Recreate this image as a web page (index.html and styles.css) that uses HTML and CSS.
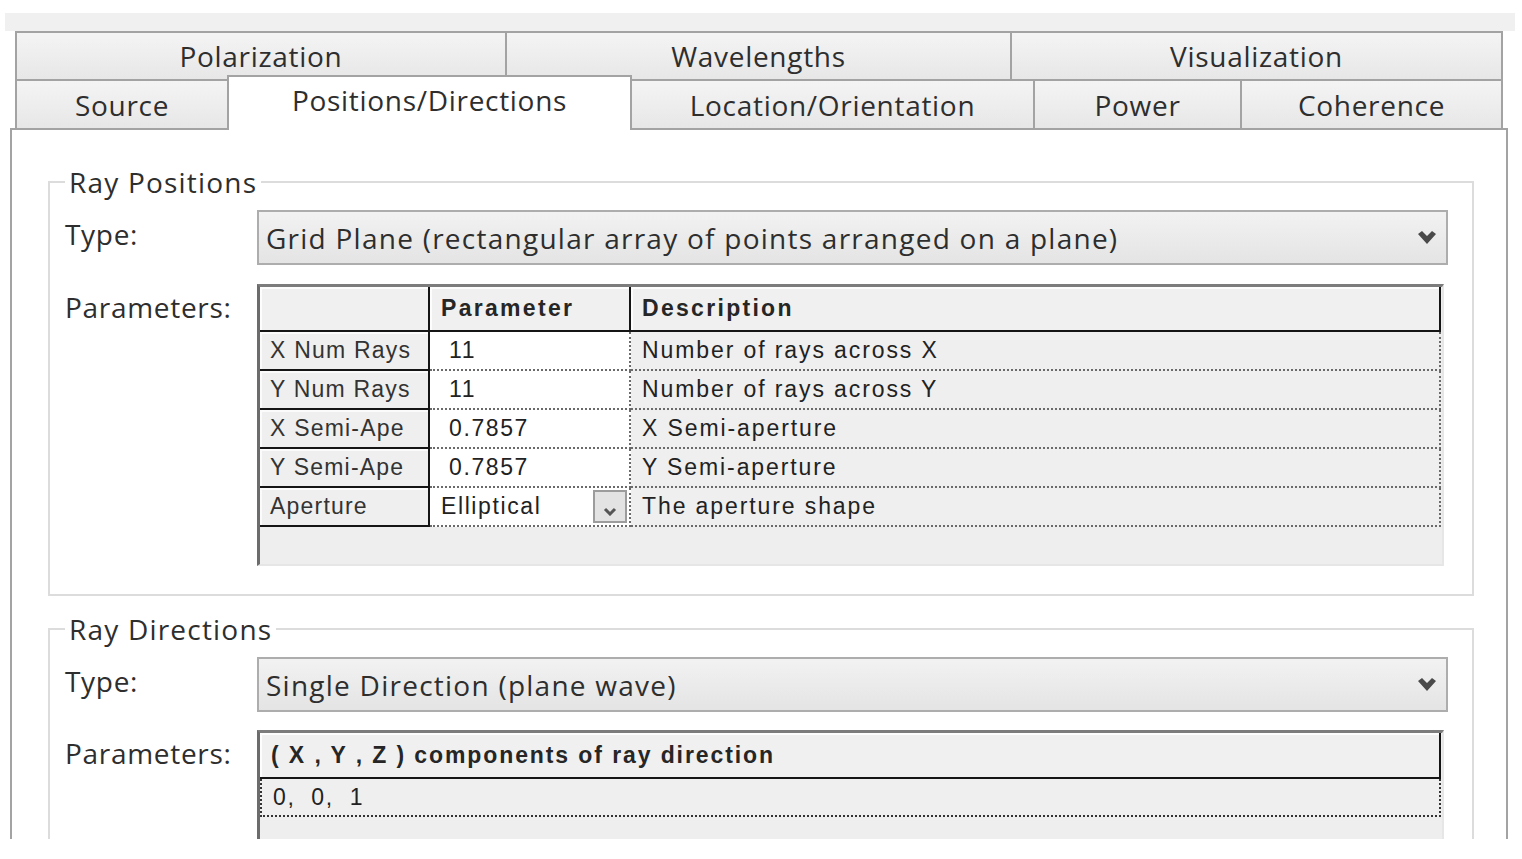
FILE: index.html
```html
<!DOCTYPE html>
<html>
<head>
<meta charset="utf-8">
<link rel="stylesheet" href="styles.css">
</head>
<body>
<div class="topband"></div>
<div class="tabs">
  <div class="tabrow row1">
    <div class="tab w-pol">Polarization</div>
    <div class="tab w-wav">Wavelengths</div>
    <div class="tab w-vis last">Visualization</div>
  </div>
  <div class="tabrow row2">
    <div class="tab w-src">Source</div>
    <div class="tab w-pos active">Positions/Directions</div>
    <div class="tab w-loc after-active">Location/Orientation</div>
    <div class="tab w-pow">Power</div>
    <div class="tab w-coh last">Coherence</div>
  </div>
</div>
<div class="panel">
  <fieldset class="group">
    <legend>Ray Positions</legend>
    <div class="frow">
      <div class="flabel type">Type:</div>
      <div class="select">
        <span>Grid Plane (rectangular array of points arranged on a plane)</span>
        <svg class="chev" width="18" height="14" viewBox="0 0 18 14"><polygon points="0,3 4,0 9,5 14,0 18,3 9,13" fill="#4a4a4a"/></svg>
      </div>
    </div>
    <div class="frow params">
      <div class="flabel">Parameters:</div>
      <div class="grid grid1">
        <div class="cell hc"></div>
        <div class="cell hc">Parameter</div>
        <div class="cell hc">Description</div>

        <div class="cell rh">X Num Rays</div>
        <div class="cell pv num">11</div>
        <div class="cell dc">Number of rays across X</div>

        <div class="cell rh">Y Num Rays</div>
        <div class="cell pv num">11</div>
        <div class="cell dc">Number of rays across Y</div>

        <div class="cell rh">X Semi-Ape</div>
        <div class="cell pv num">0.7857</div>
        <div class="cell dc">X Semi-aperture</div>

        <div class="cell rh">Y Semi-Ape</div>
        <div class="cell pv num">0.7857</div>
        <div class="cell dc">Y Semi-aperture</div>

        <div class="cell rh">Aperture</div>
        <div class="cell pv">
          <span>Elliptical</span>
          <span class="ddbtn"><svg width="14" height="9" viewBox="0 0 14 9"><polyline points="2,2 7,7 12,2" fill="none" stroke="#555" stroke-width="3"/></svg></span>
        </div>
        <div class="cell dc">The aperture shape</div>
      </div>
    </div>
  </fieldset>

  <fieldset class="group group2">
    <legend>Ray Directions</legend>
    <div class="frow">
      <div class="flabel type">Type:</div>
      <div class="select">
        <span>Single Direction (plane wave)</span>
        <svg class="chev" width="18" height="14" viewBox="0 0 18 14"><polygon points="0,3 4,0 9,5 14,0 18,3 9,13" fill="#4a4a4a"/></svg>
      </div>
    </div>
    <div class="frow params params2">
      <div class="flabel">Parameters:</div>
      <div class="grid grid2">
        <div class="cell hc hc2">( X , Y , Z ) components of ray direction</div>
        <div class="cell dr">0,  0,  1</div>
      </div>
    </div>
  </fieldset>
</div>
</body>
</html>
```
FILE: styles.css
```css
* { box-sizing: border-box; }
html, body { margin: 0; padding: 0; background: #fff; }
body {
  width: 1522px;
  height: 859px;
  overflow: hidden;
  font-family: "Open Sans", "Noto Sans", sans-serif;
  color: #2e2e2e;
}

.topband {
  height: 18px;
  margin: 13px 7px 0 5px;
  background: #f0f0f0;
}

.tabs { margin-left: 15px; width: 1488px; }
.tabrow { display: flex; }
.row1 { height: 48px; }
.row2 { height: 49px; }

.tab {
  flex: none;
  border-top: 2px solid #a3a3a3;
  border-left: 2px solid #a3a3a3;
  background: linear-gradient(#f4f4f4, #e7e7e7);
  display: flex;
  align-items: center;
  justify-content: center;
  font-size: 28px;
  letter-spacing: 0.7px;
  line-height: 1;
  color: #2e2e2e;
}
.tab.last { border-right: 2px solid #a3a3a3; }
.tab.after-active { border-left: none; }
.tab.active {
  background: #fff;
  margin-top: -4px;
  margin-bottom: -2px;
  position: relative;
  z-index: 1;
  border-right: 2px solid #a3a3a3;
  padding-bottom: 8px;
}
.w-pol { width: 490px; }
.w-wav { width: 505px; }
.w-vis { width: 493px; }
.w-src { width: 212px; }
.w-pos { width: 405px; }
.w-loc { width: 401px; }
.w-pow { width: 207px; }
.w-coh { width: 263px; }

.panel {
  margin-left: 10px;
  width: 1498px;
  height: 711px;
  border: 2px solid #a3a3a3;
  border-bottom: none;
  background: #fff;
  overflow: hidden;
}

.group {
  margin: 35px 32px 0 36px;
  border: 2px solid #dcdcdc;
  padding: 11px 24px 28px 15px;
  min-width: 0;
}
.group2 { margin-top: 16px; }
.group legend {
  font-size: 28px;
  letter-spacing: 1.2px;
  line-height: 34px;
  padding: 0 4px;
  color: #2e2e2e;
}

.frow { display: flex; align-items: center; }
.flabel {
  width: 192px;
  flex: none;
  font-size: 28px;
  letter-spacing: 0.7px;
  line-height: 34px;
  color: #2e2e2e;
}
.flabel.type { padding-bottom: 8px; }
.select {
  flex: 1;
  height: 55px;
  border: 2px solid #adadad;
  background: linear-gradient(#f2f2f2, #e4e4e4);
  display: flex;
  align-items: center;
  justify-content: space-between;
  padding: 0 10px 0 7px;
  font-size: 28px;
  letter-spacing: 1.25px;
  color: #2e2e2e;
  white-space: nowrap;
}
.chev { flex: none; }

.frow.params { margin-top: 19px; align-items: flex-start; }
.frow.params2 { margin-top: 18px; }
.params .flabel { padding-top: 6px; }

.grid {
  width: 1187px;
  flex: none;
  border-top: 3px solid #7c7c7c;
  border-left: 3px solid #6c6c6c;
  border-right: 2px solid #e6e6e6;
  border-bottom: 2px solid #e6e6e6;
  background: #eeeeee;
  display: grid;
  align-content: start;
  font-family: "Liberation Sans", Arial, sans-serif;
  font-size: 23px;
  letter-spacing: 1.6px;
  color: #222;
}
.grid1 {
  height: 282px;
  grid-template-columns: 170px 201px 810px;
  grid-template-rows: 45px;
  grid-auto-rows: 39px;
}
.grid2 {
  height: 200px;
  grid-template-columns: 1181px;
  grid-template-rows: 46px 38px;
}

.cell {
  display: flex;
  align-items: center;
  padding-left: 11px;
  white-space: pre;
  overflow: hidden;
}
.hc {
  background: #f0f0f0;
  border-right: 2px solid #151515;
  border-bottom: 2px solid #151515;
  box-shadow: inset 2px 2px 0 #fdfdfd;
  font-weight: bold;
  letter-spacing: 2.3px;
  color: #262626;
}
.hc2 { letter-spacing: 1.9px; }
.rh {
  background: #efefef;
  border-right: 2px solid #151515;
  border-bottom: 2px solid #151515;
  box-shadow: inset 2px 2px 0 #fbfbfb;
  padding-left: 10px;
  letter-spacing: 1.2px;
  color: #333;
}
.pv {
  background: #fff;
  border-right: 2px dotted #6a6a6a;
  border-bottom: 2px dotted #6a6a6a;
  padding-right: 2px;
}
.pv.num { padding-left: 19px; }
.dc {
  background: #efefef;
  border-right: 2px dotted #6a6a6a;
  border-bottom: 2px dotted #6a6a6a;
  letter-spacing: 1.9px;
}
.dr {
  background: #efefef;
  border-left: 2px dotted #333;
  border-right: 2px dotted #333;
  border-bottom: 2px dotted #333;
  padding-left: 11px;
}

.ddbtn {
  margin-left: auto;
  width: 34px;
  height: 33px;
  border: 2px solid #9c9c9c;
  background: #e3e3e3;
  display: flex;
  align-items: flex-end;
  justify-content: center;
  padding-bottom: 5px;
}
```
